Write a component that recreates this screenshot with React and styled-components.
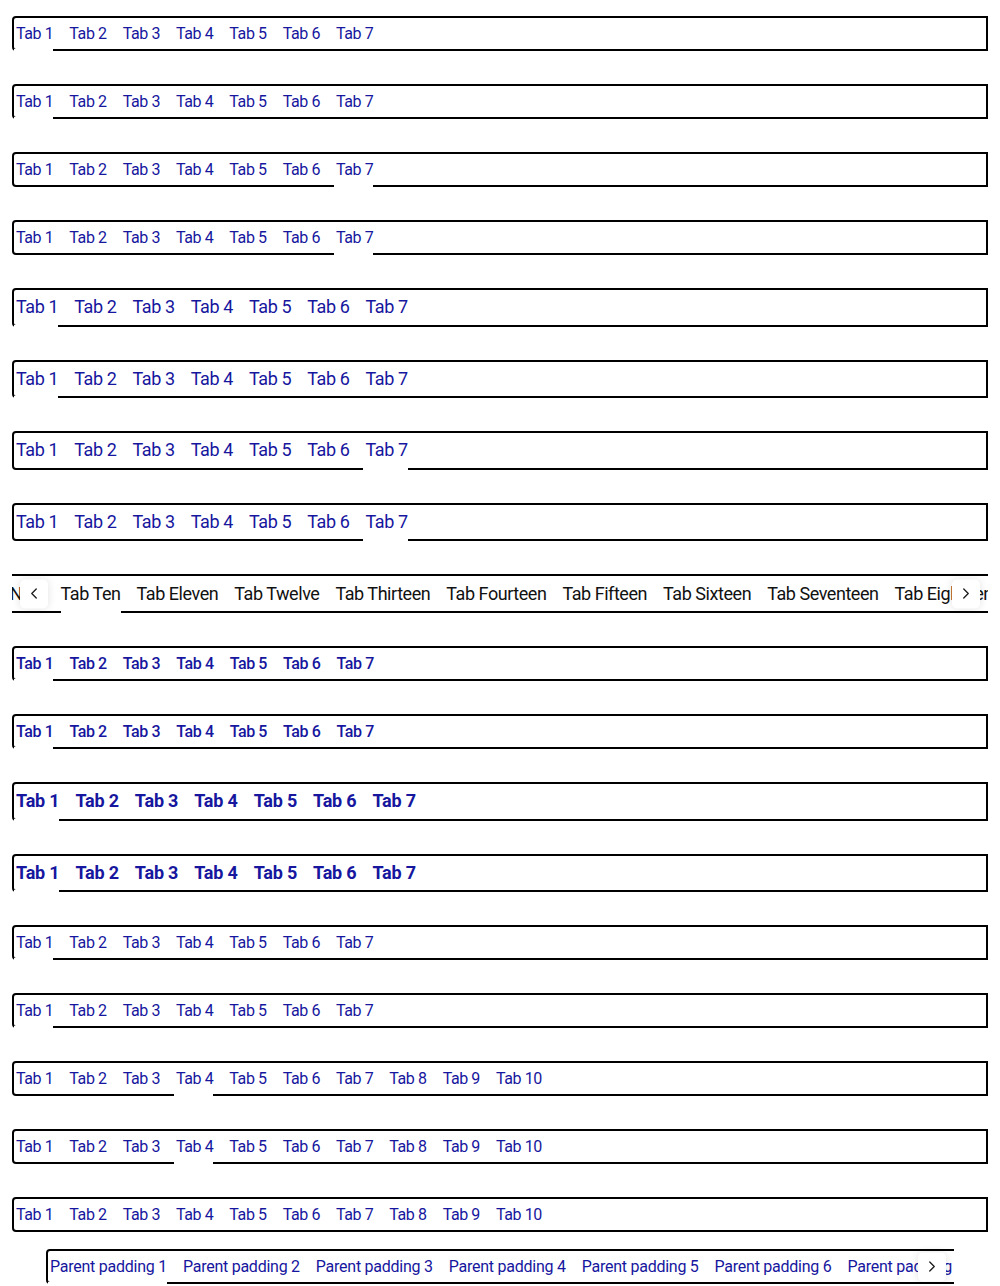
import React, { useLayoutEffect, useRef } from 'react';
import styled, { createGlobalStyle } from 'styled-components';
import { ChevronLeft, ChevronRight } from 'lucide-react';

const GlobalStyle = createGlobalStyle`
  body {
    margin: 0;
    background: #fff;
    font-family: Roboto, "Liberation Sans", sans-serif;
  }
`;

const Page = styled.div`
  display: flex;
  flex-direction: column;
  gap: 33px;
  padding: 16px 12px 0;
`;

const TabBar = styled.div`
  display: flex;
  gap: 14px;
  border: 2px solid #000;
  border-radius: 4px 0 0 4px;
`;

const Tab = styled.button`
  position: relative;
  border: none;
  background: none;
  margin: 0;
  padding: 6px 0 6px 2px;
  font-family: inherit;
  font-size: ${(props) => props.size}px;
  font-weight: ${(props) => props.weight};
  letter-spacing: ${(props) => props.tracking ?? -0.4}px;
  line-height: ${(props) => (props.size > 16 ? 22.5 : 19)}px;
  color: #16169e;
  white-space: nowrap;
  cursor: pointer;

  &::after {
    content: '';
    display: ${(props) => (props.isSelected ? 'block' : 'none')};
    position: absolute;
    left: 0;
    right: 0;
    bottom: -2px;
    height: 2px;
    background: #fff;
  }
`;

const ScrollFrame = styled.div`
  position: relative;
  margin: ${(props) => props.inset || '0'};
`;

const Viewport = styled.div`
  overflow: hidden;
`;

const Track = styled.div`
  display: flex;
  gap: ${(props) => props.gap}px;
  width: max-content;
  border-top: 2px solid #000;
  border-bottom: 2px solid #000;
  border-left: ${(props) => (props.boxed ? '2px solid #000' : 'none')};
  border-right: ${(props) => (props.boxed ? '2px solid #000' : 'none')};
  border-radius: ${(props) => (props.boxed ? '4px' : '0')};
`;

const ScrollTab = styled(Tab)`
  padding: ${(props) => (props.plain ? '6.5px 0' : '6px 0 6px 2px')};
  line-height: ${(props) => (props.plain ? 22 : 19)}px;
  color: ${(props) => (props.plain ? '#111' : '#16169e')};
`;

const ArrowButton = styled.button`
  position: absolute;
  top: 50%;
  ${(props) => props.side}: 8px;
  transform: translateY(-50%);
  width: 28px;
  height: 29px;
  display: flex;
  align-items: center;
  justify-content: center;
  padding: 0;
  border: none;
  border-radius: 5px;
  background: #fff;
  box-shadow: 0 0 8px rgba(0, 0, 0, 0.12);
  color: #1a1a1a;
`;

const bars = [
  { size: 16, weight: 400, count: 7, selected: 0 },
  { size: 16, weight: 400, count: 7, selected: 0 },
  { size: 16, weight: 400, count: 7, selected: 6 },
  { size: 16, weight: 400, count: 7, selected: 6 },
  { size: 18, weight: 400, count: 7, selected: 0 },
  { size: 18, weight: 400, count: 7, selected: 0 },
  { size: 18, weight: 400, count: 7, selected: 6 },
  { size: 18, weight: 400, count: 7, selected: 6 },
  { scroll: true },
  { size: 16, weight: 500, count: 7, selected: 0 },
  { size: 16, weight: 500, count: 7, selected: 0 },
  { size: 18, weight: 700, count: 7, selected: 0, tracking: -0.2 },
  { size: 18, weight: 700, count: 7, selected: 0, tracking: -0.2 },
  { size: 16, weight: 400, count: 7, selected: 0 },
  { size: 16, weight: 400, count: 7, selected: 0 },
  { size: 16, weight: 400, count: 10, selected: 3 },
  { size: 16, weight: 400, count: 10, selected: 3 },
  { size: 16, weight: 400, count: 10, selected: -1 },
];

const words = [
  'One', 'Two', 'Three', 'Four', 'Five', 'Six', 'Seven', 'Eight', 'Nine',
  'Ten', 'Eleven', 'Twelve', 'Thirteen', 'Fourteen', 'Fifteen', 'Sixteen',
  'Seventeen', 'Eighteen', 'Nineteen', 'Twenty',
];

const SimpleTabs = ({ size, weight, count, selected, tracking }) => (
  <TabBar>
    {Array.from({ length: count }, (_, i) => (
      <Tab
        key={i}
        size={size}
        weight={weight}
        tracking={tracking}
        isSelected={i === selected}
      >
        Tab {i + 1}
      </Tab>
    ))}
  </TabBar>
);

// carrusel de pestañas desplazado hasta la pestaña seleccionada
const ScrollingTabs = () => {
  const viewRef = useRef(null);
  const selRef = useRef(null);

  useLayoutEffect(() => {
    if (viewRef.current && selRef.current) {
      viewRef.current.scrollLeft = selRef.current.offsetLeft - 49;
    }
  }, []);

  return (
    <ScrollFrame>
      <Viewport ref={viewRef}>
        <Track gap={16}>
          {words.map((w, i) => (
            <ScrollTab
              key={w}
              ref={i === 9 ? selRef : null}
              plain
              size={18}
              weight={400}
              tracking={-0.45}
              isSelected={i === 9}
            >
              Tab {w}
            </ScrollTab>
          ))}
        </Track>
      </Viewport>
      <ArrowButton side="left">
        <ChevronLeft size={18} strokeWidth={1.75} />
      </ArrowButton>
      <ArrowButton side="right">
        <ChevronRight size={18} strokeWidth={1.75} />
      </ArrowButton>
    </ScrollFrame>
  );
};

const ParentPaddingTabs = () => (
  <ScrollFrame inset="-16px 34px 0">
    <Viewport>
      <Track gap={14} boxed>
        {Array.from({ length: 10 }, (_, i) => (
          <ScrollTab
            key={i}
            size={16}
            weight={400}
            tracking={-0.25}
            isSelected={i === 0}
          >
            Parent padding {i + 1}
          </ScrollTab>
        ))}
      </Track>
    </Viewport>
    <ArrowButton side="right">
      <ChevronRight size={18} strokeWidth={1.75} />
    </ArrowButton>
  </ScrollFrame>
);

export default function App() {
  return (
    <>
      <GlobalStyle />
      <Page>
        {bars.map((bar, i) =>
          bar.scroll ? (
            <ScrollingTabs key={i} />
          ) : (
            <SimpleTabs key={i} {...bar} />
          )
        )}
        <ParentPaddingTabs />
      </Page>
    </>
  );
}
